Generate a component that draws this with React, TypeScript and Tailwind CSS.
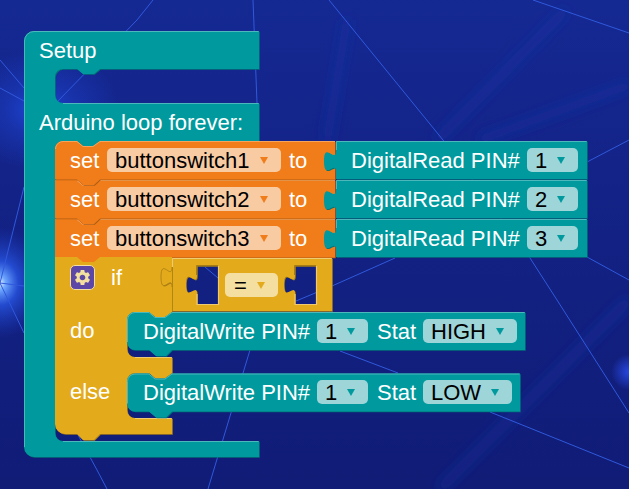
import React from "react";
import { MdSettings } from "react-icons/md";

const TEAL = "#009a9e";
const TEAL_D = "#007177";
const TEAL_L = "#4db8bb";
const OR = "#f07d19";
const OR_D = "#b05c12";
const OR_L = "#f5a45e";
const YE = "#e3aa1c";
const YE_D = "#a67c14";
const YE_L = "#eecb72";

function Block({ d, fill, dark, light, h }: { d: string; fill: string; dark: string; light: string; h: string }) {
  return (
    <g>
      <path d={d} fill={dark} fillRule="evenodd" transform="translate(0.8,0.8)" />
      <path d={d} fill={fill} fillRule="evenodd" />
      <path d={h} fill="none" stroke={light} strokeWidth="1" />
    </g>
  );
}

const outer =
  "M24,41 a10,10 0 0 1 10,-10 H259 V69 H100 L94,74 H83 L77,69 H63 a8,8 0 0 0 -8,8 V95 a8,8 0 0 0 8,8 H259 V141 H100 L94,146 H83 L77,141 H63 a8,8 0 0 0 -8,8 V433 a8,8 0 0 0 8,8 H259 V457 H34 a10,10 0 0 1 -10,-10 Z";
const outerH = "M24.5,447 V41 a9.5,9.5 0 0 1 9.5,-9.5 H258.5 M63,103.5 H258.5 M63,441.5 H258.5";

const orange = (y: number, first: boolean) =>
  `M${first ? "55,149 a8,8 0 0 1 8,-8" : `55,${y}`} H77 L83,${y + 5} H93 L100,${y} H335 V${y + 38.5} H100 L94,${y + 44} H83 L77,${y + 38.5} H55 Z`;
const orangeH = (y: number) => `M77,${y + 0.5} L83,${y + 5.5} H93 L100,${y + 0.5} H335`;

const read = (y: number) =>
  `M336,${y} H587 V${y + 38} H336 V${y + 31} c0,-13 -12,10 -12,-11 s12,4 12,-11 Z`;
const readH = (y: number) => `M336.5,${y + 9} V${y + 0.5} H586.5`;

const write = (y: number, r: number) =>
  `M135,${y} H149 L155,${y + 5} H165 L172,${y} H${r} V${y + 38} H172 L166,${y + 44} H156 L149,${y + 38} H135 a8,8 0 0 1 -8,-8 V${y + 8} a8,8 0 0 1 8,-8 Z`;
const writeH = (y: number, r: number) =>
  `M127.5,${y + 30} V${y + 8} a7.5,7.5 0 0 1 7.5,-7.5 H149 L155,${y + 5.5} H165 L172,${y + 0.5} H${r - 0.5}`;

const yellowMain =
  "M55,257 H172 V312 L165,317 H155 L149,312 H135 a8,8 0 0 0 -8,8 V349 a8,8 0 0 0 8,8 H172 V373 L165,378 H155 L149,373 H135 a8,8 0 0 0 -8,8 V410 a8,8 0 0 0 8,8 H172 V434 H100 L94,440 H83 L77,434 H65 a10,10 0 0 1 -10,-10 Z";
const yellowH = "M135,357.5 H171.5 M135,418.5 H171.5";

const hole = (x: number) =>
  `M${x},266 H${x + 21} V304 H${x} V294 c0,-12 -11,9 -11,-9.5 s11,4 11,-9.5 Z`;
const compare =
  `M172,258 H332 V311 H172 V287 c0,-13 -11,10 -11,-10 s11,4 11,-10 Z ${hole(197)} ${hole(295)}`;

function Arrow({ c }: { c: string }) {
  return (
    <svg width="8" height="7" viewBox="0 0 8 7" className="shrink-0">
      <path d="M0,0 H8 L4,7 Z" fill={c} />
    </svg>
  );
}

function Chip({ text, cls, arrow }: { text: string; cls: string; arrow: string }) {
  return (
    <div className={`h-6 rounded-[5px] flex items-center justify-between pl-2 pr-[13px] text-black ${cls}`}>
      <span className="pt-[2px]">{text}</span>
      <Arrow c={arrow} />
    </div>
  );
}

function SetRow({ n }: { n: string }) {
  return (
    <div className="flex items-center h-[38px] text-white">
      <span className="w-[37px] pt-[2px]">set</span>
      <Chip text={`buttonswitch${n}`} cls="w-[174px] bg-[#f8cba3]" arrow={OR} />
      <span className="ml-2 pt-[2px]">to</span>
    </div>
  );
}

function ReadRow({ n }: { n: string }) {
  return (
    <div className="flex items-center h-[38px] text-white">
      <span className="w-[176px] whitespace-nowrap pt-[2px]">DigitalRead PIN#</span>
      <Chip text={n} cls="w-[51px] bg-[#9dd5d8]" arrow={TEAL} />
    </div>
  );
}

function WriteRow({ stat, w }: { stat: string; w: string }) {
  return (
    <div className="flex items-center h-[38px] text-white">
      <span className="w-[174px] whitespace-nowrap pt-[2px]">DigitalWrite PIN#</span>
      <Chip text="1" cls="w-[51px] bg-[#9dd5d8]" arrow={TEAL} />
      <span className="ml-[9px] w-[46px] pt-[2px]">Stat</span>
      <Chip text={stat} cls={`${w} bg-[#9dd5d8]`} arrow={TEAL} />
    </div>
  );
}

const lines = [
  "M329,0 L443,140 L530,258 L557,300 L629,413",
  "M533,0 L629,33",
  "M587,162 L629,140",
  "M587,257 L629,280",
  "M395,258 L332,286 L296,301",
  "M340,351 L398,373",
  "M490,412 L629,468",
  "M253,0 L257,103",
  "M137,20 L153,0 M137,20 L57,102",
  "M0,60 L24,88",
  "M0,88 L24,101",
  "M0,283 L24,187",
  "M0,283 L24,286",
  "M0,283 L24,333",
  "M205,267 L218,278",
  "M78,435 L97,470 L107,489",
  "M250,350 L208,489",
];

export default function App() {
  return (
    <div className="relative w-[629px] h-[489px] overflow-hidden text-[22px] leading-none font-['Liberation_Sans',Arial,sans-serif]">
      <svg width="629" height="489" viewBox="0 0 629 489" className="absolute inset-0">
        <defs>
          <linearGradient id="bg" x1="0" y1="0" x2="0" y2="1">
            <stop offset="0" stopColor="#152993" />
            <stop offset="0.4" stopColor="#132286" />
            <stop offset="1" stopColor="#101c76" />
          </linearGradient>
          <radialGradient id="g1">
            <stop offset="0" stopColor="#1f4be0" stopOpacity="0.95" />
            <stop offset="0.45" stopColor="#1c3fc8" stopOpacity="0.5" />
            <stop offset="1" stopColor="#1c3fc8" stopOpacity="0" />
          </radialGradient>
          <radialGradient id="g2">
            <stop offset="0" stopColor="#e4f2ff" />
            <stop offset="0.12" stopColor="#6fa8ff" />
            <stop offset="0.4" stopColor="#2a5cf0" stopOpacity="0.7" />
            <stop offset="1" stopColor="#1c3fc8" stopOpacity="0" />
          </radialGradient>
          <radialGradient id="g3">
            <stop offset="0" stopColor="#2748e0" />
            <stop offset="1" stopColor="#2748e0" stopOpacity="0" />
          </radialGradient>
          <filter id="blur" x="-20%" y="-20%" width="140%" height="140%">
            <feGaussianBlur stdDeviation="6" />
          </filter>
        </defs>
        <rect width="629" height="489" fill="url(#bg)" />
        <ellipse cx="40" cy="110" rx="80" ry="60" fill="url(#g1)" />
        <ellipse cx="0" cy="283" rx="46" ry="56" fill="url(#g2)" />
        <circle cx="629" cy="372" r="18" fill="url(#g3)" />
        <g stroke="#1c34a8" strokeWidth="9" strokeOpacity="0.45" filter="url(#blur)" fill="none">
          <path d="M437,140 L566,10" />
          <path d="M327,140 L347,20" />
          <path d="M440,489 L629,300" />
          <path d="M480,140 L629,85" />
        </g>
        <g stroke="#3059dc" strokeWidth="1" fill="none">
          {lines.map((d) => (
            <path key={d} d={d} />
          ))}
        </g>

        <Block d={outer} fill={TEAL} dark={TEAL_D} light={TEAL_L} h={outerH} />
        {[219, 180, 141].map((y) => (
          <Block key={y} d={orange(y, y === 141)} fill={OR} dark={OR_D} light={OR_L} h={orangeH(y)} />
        ))}
        <path d="M55.5,149 a7.5,7.5 0 0 1 7.5,-7.5 H77" fill="none" stroke={OR_L} />
        {[141, 180, 219].map((y) => (
          <Block key={y} d={read(y)} fill={TEAL} dark={TEAL_D} light={TEAL_L} h={readH(y)} />
        ))}

        <Block d={yellowMain} fill={YE} dark={YE_D} light={YE_L} h={yellowH} />
        <path d="M77,257 L83,262 H94 L100,257 Z" fill={OR} />
        <Block d={compare} fill={YE} dark={YE_D} light={YE_L} h="M172.5,267 V258.5 H331.5" />
        <path d="M172,287 c0,-13 -11,10 -11,-10 s11,4 11,-10" fill="none" stroke={YE_D} strokeWidth="0.8" />
        <path d="M172.5,267 V311" fill="none" stroke={YE_D} strokeWidth="0.8" />
        {[197, 295].map((x) => (
          <g key={x} fill="none">
            <path d={`M${x},294 V304.5 H${x + 21.5} V266`} stroke={YE_L} strokeWidth="1.2" />
            <path d={`M${x - 0.5},275 V265.5 H${x + 21}`} stroke={YE_D} strokeWidth="1" />
          </g>
        ))}

        <Block d={write(312, 525)} fill={TEAL} dark={TEAL_D} light={TEAL_L} h={writeH(312, 525)} />
        <Block d={write(373.5, 520)} fill={TEAL} dark={TEAL_D} light={TEAL_L} h={writeH(373.5, 520)} />
      </svg>

      {/* Stack labels of the outer block */}
      <div className="absolute left-[39px] top-[31px] flex flex-col gap-[34px] text-white">
        <div className="h-[38px] flex items-center pt-[2px]">Setup</div>
        <div className="h-[38px] flex items-center pt-[2px]">Arduino loop forever:</div>
      </div>

      {/* set … to column */}
      <div className="absolute left-[70px] top-[141px] flex flex-col gap-px">
        <SetRow n="1" />
        <SetRow n="2" />
        <SetRow n="3" />
      </div>

      {/* value blocks column */}
      <div className="absolute left-[351px] top-[141px] flex flex-col gap-px">
        <ReadRow n="1" />
        <ReadRow n="2" />
        <ReadRow n="3" />
      </div>

      {/* if / do / else labels */}
      <div className="absolute left-[70px] top-[258px] flex flex-col text-white">
        <div className="h-[38px] flex items-center gap-4">
          <div className="w-[25px] h-[25px] rounded-[5px] bg-[#5c46a6] border border-[#f3dfa0] flex items-center justify-center">
            <MdSettings size={19} color="#f3dfa0" />
          </div>
          <span className="pt-[2px]">if</span>
        </div>
        <div className="h-[38px] mt-[15px] flex items-center pt-[2px]">do</div>
        <div className="h-[38px] mt-[23px] flex items-center pt-[2px]">else</div>
      </div>

      <div className="absolute left-[225px] top-[273px] w-[53px] h-6 rounded-[5px] bg-[#f4dea0] flex items-center justify-between pl-[9px] pr-[13px] text-black">
        <span className="pt-[2px]">=</span>
        <Arrow c={YE} />
      </div>

      <div className="absolute left-[143px] top-[312px] flex flex-col gap-[23px]">
        <WriteRow stat="HIGH" w="w-[94px]" />
        <WriteRow stat="LOW" w="w-[89px]" />
      </div>
    </div>
  );
}
